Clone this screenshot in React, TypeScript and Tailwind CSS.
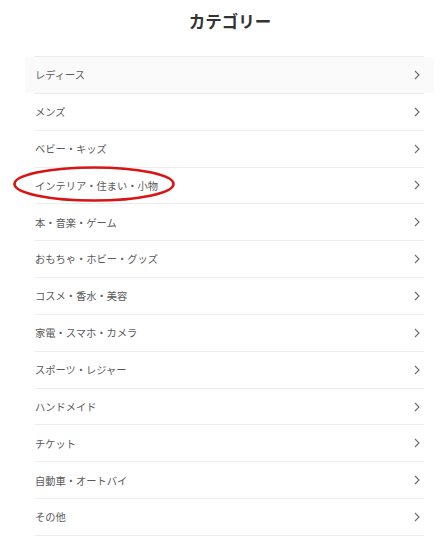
import React from "react";

const items = [
  "レディース",
  "メンズ",
  "ベビー・キッズ",
  "インテリア・住まい・小物",
  "本・音楽・ゲーム",
  "おもちゃ・ホビー・グッズ",
  "コスメ・香水・美容",
  "家電・スマホ・カメラ",
  "スポーツ・レジャー",
  "ハンドメイド",
  "チケット",
  "自動車・オートバイ",
  "その他",
];

function Chevron() {
  return (
    <svg width="6" height="10" viewBox="0 0 6 10" fill="none">
      <path d="M1 1 L5 5 L1 9" stroke="#6b6b6b" strokeWidth="1.1" />
    </svg>
  );
}

export default function App() {
  return (
    <div
      className="relative w-[442px] h-[557px] bg-white overflow-hidden"
      style={{ fontFamily: '"Noto Sans CJK JP", "Noto Sans", sans-serif' }}
    >
      <h1 className="pt-[9px] text-center text-[16.5px] font-bold text-[#333] leading-[24px] pl-[18px]">
        カテゴリー
      </h1>
      <ul className="ml-[35px] w-[389px] mt-[23px] border-t border-[#ececec]">
        {items.map((t, i) => (
          <li
            key={t}
            className="relative h-[36.85px] flex items-center justify-between border-b border-[#ececec]"
          >
            {i === 0 && (
              <div className="absolute top-0 bottom-0 -left-[10px] -right-[10px] bg-[#fafafa] rounded-[4px]" />
            )}
            <span className="relative text-[10.25px] text-[#5a5a5a]">{t}</span>
            <span className="relative mr-[4px] flex">
              <Chevron />
            </span>
          </li>
        ))}
      </ul>
      <svg
        className="absolute left-[12px] top-[165px]"
        width="164"
        height="38"
        viewBox="0 0 164 38"
      >
        <ellipse cx="82" cy="19" rx="79.5" ry="16.5" fill="none" stroke="#d81414" strokeWidth="2.6" />
      </svg>
    </div>
  );
}
